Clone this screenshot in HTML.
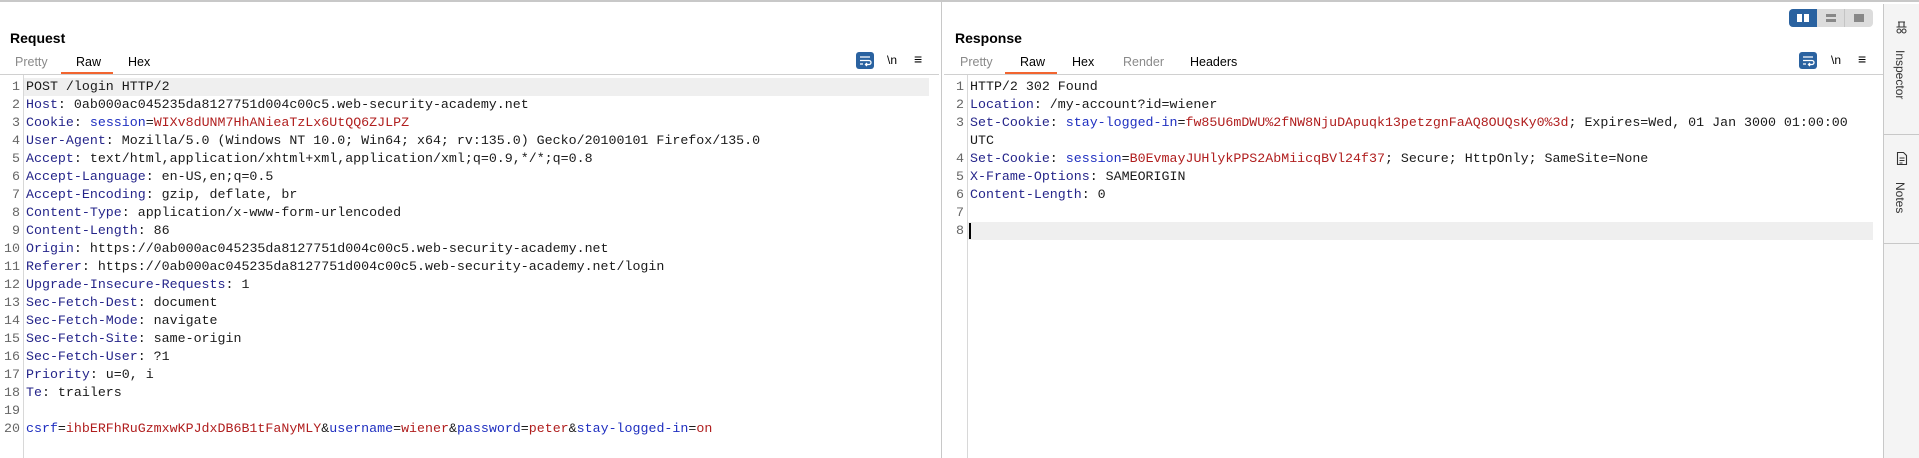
<!DOCTYPE html>
<html><head><meta charset="utf-8"><style>
*{margin:0;padding:0;box-sizing:border-box}
body{width:1919px;height:458px;background:#fff;position:relative;overflow:hidden;font-family:"Liberation Sans",sans-serif;color:#000}
.abs{position:absolute}
.title{font-weight:bold;font-size:14px}
.tab{position:absolute;font-size:12.5px;top:55px}
.code{position:absolute;font-family:"Liberation Mono",monospace;font-size:13.3px;line-height:18px;white-space:pre;color:#1a1a1a}
.ln{position:absolute;font-family:"Liberation Mono",monospace;font-size:13.3px;line-height:18px;color:#666;text-align:right;white-space:pre}
.k{color:#25258a}.n{color:#1f2fc0}.v{color:#b01e1e}
.icon-wrap{position:absolute;width:18px;height:17px;background:#2a62a0;border-radius:3px}
</style></head><body>
<div class="abs" style="left:0;top:0;width:1919px;height:2px;background:#c8c8c8"></div>

<!-- Request pane -->
<div class="abs title" style="left:10px;top:30px">Request</div>
<div class="tab" style="left:15px;color:#8a8a8a">Pretty</div>
<div class="tab" style="left:76px">Raw</div>
<div class="tab" style="left:128px">Hex</div>
<div class="abs" style="left:61px;top:72px;width:52px;height:2px;background:#f26530"></div>
<div class="abs" style="left:0;top:74px;width:939px;height:1px;background:#d0d0d0"></div>
<div class="icon-wrap" style="left:856px;top:52px"><svg width="18" height="17"><path d="M4 5h10M4 8.5h9a2 2 0 0 1 0 4h-3M11 11l-1.5 1.5 1.5 1.5M4 12h3" stroke="#fff" stroke-width="1.3" fill="none"/></svg></div>
<div class="abs" style="left:887px;top:53px;font-size:12px">\n</div>
<div class="abs" style="left:914px;top:51px;font-size:14px">≡</div>
<div class="abs" style="left:23px;top:75px;width:1px;height:383px;background:#d8d8d8"></div>
<div class="abs" style="left:24px;top:78px;width:905px;height:18px;background:#efefef"></div>
<div class="ln" style="left:0;top:78px;width:20px">1
2
3
4
5
6
7
8
9
10
11
12
13
14
15
16
17
18
19
20</div>
<div class="code" style="left:26px;top:78px">POST /login HTTP/2
<span class="k">Host</span>: 0ab000ac045235da8127751d004c00c5.web-security-academy.net
<span class="k">Cookie</span>: <span class="n">session</span>=<span class="v">WIXv8dUNM7HhANieaTzLx6UtQQ6ZJLPZ</span>
<span class="k">User-Agent</span>: Mozilla/5.0 (Windows NT 10.0; Win64; x64; rv:135.0) Gecko/20100101 Firefox/135.0
<span class="k">Accept</span>: text/html,application/xhtml+xml,application/xml;q=0.9,*/*;q=0.8
<span class="k">Accept-Language</span>: en-US,en;q=0.5
<span class="k">Accept-Encoding</span>: gzip, deflate, br
<span class="k">Content-Type</span>: application/x-www-form-urlencoded
<span class="k">Content-Length</span>: 86
<span class="k">Origin</span>: https://0ab000ac045235da8127751d004c00c5.web-security-academy.net
<span class="k">Referer</span>: https://0ab000ac045235da8127751d004c00c5.web-security-academy.net/login
<span class="k">Upgrade-Insecure-Requests</span>: 1
<span class="k">Sec-Fetch-Dest</span>: document
<span class="k">Sec-Fetch-Mode</span>: navigate
<span class="k">Sec-Fetch-Site</span>: same-origin
<span class="k">Sec-Fetch-User</span>: ?1
<span class="k">Priority</span>: u=0, i
<span class="k">Te</span>: trailers

<span class="n">csrf</span>=<span class="v">ihbERFhRuGzmxwKPJdxDB6B1tFaNyMLY</span>&amp;<span class="n">username</span>=<span class="v">wiener</span>&amp;<span class="n">password</span>=<span class="v">peter</span>&amp;<span class="n">stay-logged-in</span>=<span class="v">on</span></div>

<!-- divider -->
<div class="abs" style="left:941px;top:2px;width:1px;height:456px;background:#c8c8c8"></div>

<!-- Response pane -->
<div class="abs title" style="left:955px;top:30px">Response</div>
<div class="tab" style="left:960px;color:#8a8a8a">Pretty</div>
<div class="tab" style="left:1020px">Raw</div>
<div class="tab" style="left:1072px">Hex</div>
<div class="tab" style="left:1123px;color:#8a8a8a">Render</div>
<div class="tab" style="left:1190px">Headers</div>
<div class="abs" style="left:1005px;top:72px;width:52px;height:2px;background:#f26530"></div>
<div class="abs" style="left:944px;top:74px;width:939px;height:1px;background:#d0d0d0"></div>
<div class="icon-wrap" style="left:1799px;top:52px"><svg width="18" height="17"><path d="M4 5h10M4 8.5h9a2 2 0 0 1 0 4h-3M11 11l-1.5 1.5 1.5 1.5M4 12h3" stroke="#fff" stroke-width="1.3" fill="none"/></svg></div>
<div class="abs" style="left:1831px;top:53px;font-size:12px">\n</div>
<div class="abs" style="left:1858px;top:51px;font-size:14px">≡</div>
<div class="abs" style="left:967px;top:75px;width:1px;height:383px;background:#d8d8d8"></div>
<div class="abs" style="left:968px;top:222px;width:905px;height:18px;background:#efefef"></div>
<div class="abs" style="left:969px;top:223px;width:2px;height:16px;background:#000"></div>
<div class="ln" style="left:945px;top:78px;width:19px">1
2
3

4
5
6
7
8</div>
<div class="code" style="left:970px;top:78px">HTTP/2 302 Found
<span class="k">Location</span>: /my-account?id=wiener
<span class="k">Set-Cookie</span>: <span class="n">stay-logged-in</span>=<span class="v">fw85U6mDWU%2fNW8NjuDApuqk13petzgnFaAQ8OUQsKy0%3d</span>; Expires=Wed, 01 Jan 3000 01:00:00
UTC
<span class="k">Set-Cookie</span>: <span class="n">session</span>=<span class="v">B0EvmayJUHlykPPS2AbMiicqBVl24f37</span>; Secure; HttpOnly; SameSite=None
<span class="k">X-Frame-Options</span>: SAMEORIGIN
<span class="k">Content-Length</span>: 0</div>

<!-- layout toggles -->
<div class="abs" style="left:1789px;top:9px;width:84px;height:18px;background:#dcdcdc;border-radius:4px"></div>
<div class="abs" style="left:1789px;top:9px;width:28px;height:18px;background:#2a62a0;border-radius:4px 0 0 4px"></div>
<div class="abs" style="left:1797px;top:14px;width:5px;height:8px;background:#fff"></div>
<div class="abs" style="left:1804px;top:14px;width:5px;height:8px;background:#fff"></div>
<div class="abs" style="left:1826px;top:14px;width:10px;height:3px;background:#888"></div>
<div class="abs" style="left:1826px;top:19px;width:10px;height:3px;background:#888"></div>
<div class="abs" style="left:1844px;top:9px;width:1px;height:18px;background:#c4c4c4"></div>
<div class="abs" style="left:1854px;top:14px;width:10px;height:8px;background:#888"></div>

<!-- sidebar -->
<div class="abs" style="left:1883px;top:4px;width:36px;height:454px;background:#f4f4f4;border-left:1px solid #c8c8c8"></div>
<div class="abs" style="left:1884px;top:134px;width:35px;height:1px;background:#c8c8c8"></div>
<div class="abs" style="left:1884px;top:243px;width:35px;height:1px;background:#c8c8c8"></div>
<svg class="abs" style="left:1895px;top:20px" width="14" height="16"><path d="M3 2h7M4 2v5M9 2v5M1.5 7h10" stroke="#333" stroke-width="1.1" fill="none"/><circle cx="4" cy="11" r="2" stroke="#333" fill="none"/><circle cx="9" cy="11" r="2" stroke="#333" fill="none"/></svg>
<div class="abs" style="left:1893px;top:50px;font-size:12px;color:#333;writing-mode:vertical-rl">Inspector</div>
<svg class="abs" style="left:1896px;top:151px" width="12" height="15"><path d="M1.5 1.5h6l3 3v9h-9z M3.5 7h5M3.5 9.5h5M3.5 12h3" stroke="#333" stroke-width="1.1" fill="none"/></svg>
<div class="abs" style="left:1893px;top:182px;font-size:12px;color:#333;writing-mode:vertical-rl">Notes</div>
</body></html>
